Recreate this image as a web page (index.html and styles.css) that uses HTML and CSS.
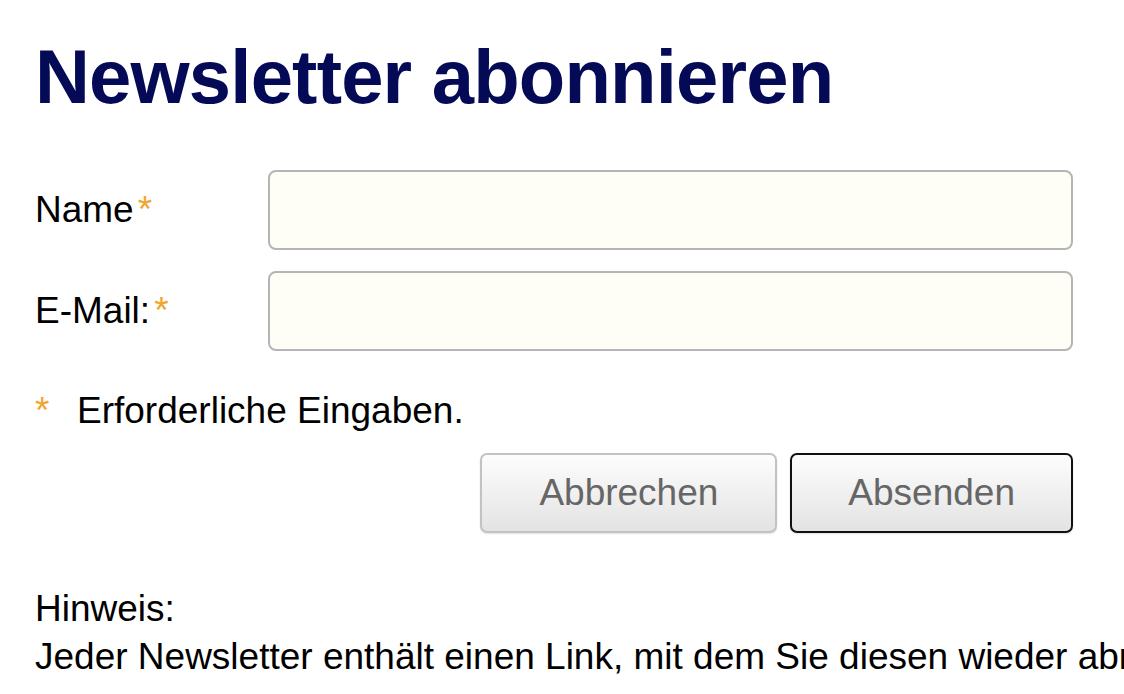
FILE: index.html
```html
<!DOCTYPE html>
<html lang="de">
<head>
  <meta charset="UTF-8">
  <meta name="viewport" content="width=device-width, initial-scale=1.0">
  <title>Newsletter abonnieren</title>
  <link rel="stylesheet" href="styles.css">
</head>
<body>
  <h1>Newsletter abonnieren</h1>

  <form class="subscribe">
    <div class="row">
      <label for="name">Name<span class="req">*</span></label>
      <input type="text" id="name">
    </div>
    <div class="row">
      <label for="email">E-Mail:<span class="req">*</span></label>
      <input type="text" id="email">
    </div>

    <p class="note"><span class="req">*</span>Erforderliche Eingaben.</p>

    <div class="actions">
      <button type="button">Abbrechen</button>
      <button type="submit" class="focused">Absenden</button>
    </div>
  </form>

  <div class="hint">
    <p>Hinweis:</p>
    <p>Jeder Newsletter enthält einen Link, mit dem Sie diesen wieder abmelden können.</p>
  </div>
</body>
</html>
```

FILE: styles.css
```css
body {
  font-family: 'Liberation Sans', Arial, sans-serif;
  font-size: 37px;
  color: #000;
  background: #fff;
  margin: 0;
  padding: 33px 0 0 35px;
  overflow: hidden;
}
h1 {
  margin: 0;
  font-size: 76px;
  line-height: 1.15;
  font-weight: bold;
  color: #050a56;
  letter-spacing: -0.8px;
}
.subscribe {
  width: 1038px;
  margin-top: 50px;
}
.row {
  display: grid;
  grid-template-columns: 233px 1fr;
  align-items: center;
  margin-bottom: 21px;
}
.row label {
  line-height: 1.2;
}
.req {
  color: #f3a531;
  margin-left: 4px;
}
.row input {
  box-sizing: border-box;
  height: 80px;
  width: 100%;
  border: 2px solid #b5b5b5;
  border-radius: 8px;
  background: #fffef6;
  font-size: 36px;
  font-family: inherit;
  padding: 0 14px;
}
.note {
  margin: 38px 0 0;
  line-height: 1.2;
}
.note .req {
  display: inline-block;
  width: 42px;
  margin-left: 0;
}
.actions {
  display: flex;
  justify-content: flex-end;
  gap: 13px;
  margin-top: 19px;
}
.actions button {
  height: 80px;
  padding: 0 57px;
  font-family: inherit;
  font-size: 37px;
  color: #666;
  background: linear-gradient(#fdfdfd, #e3e3e4);
  border: 2px solid #c2c2c2;
  border-radius: 7px;
  box-shadow: 0 1px 2px rgba(0,0,0,0.12);
}
.actions button.focused {
  border-color: #111;
  padding: 0 56px;
}
.hint {
  margin-top: 52px;
  white-space: nowrap;
}
.hint p {
  margin: 0;
  line-height: 48px;
}
```
